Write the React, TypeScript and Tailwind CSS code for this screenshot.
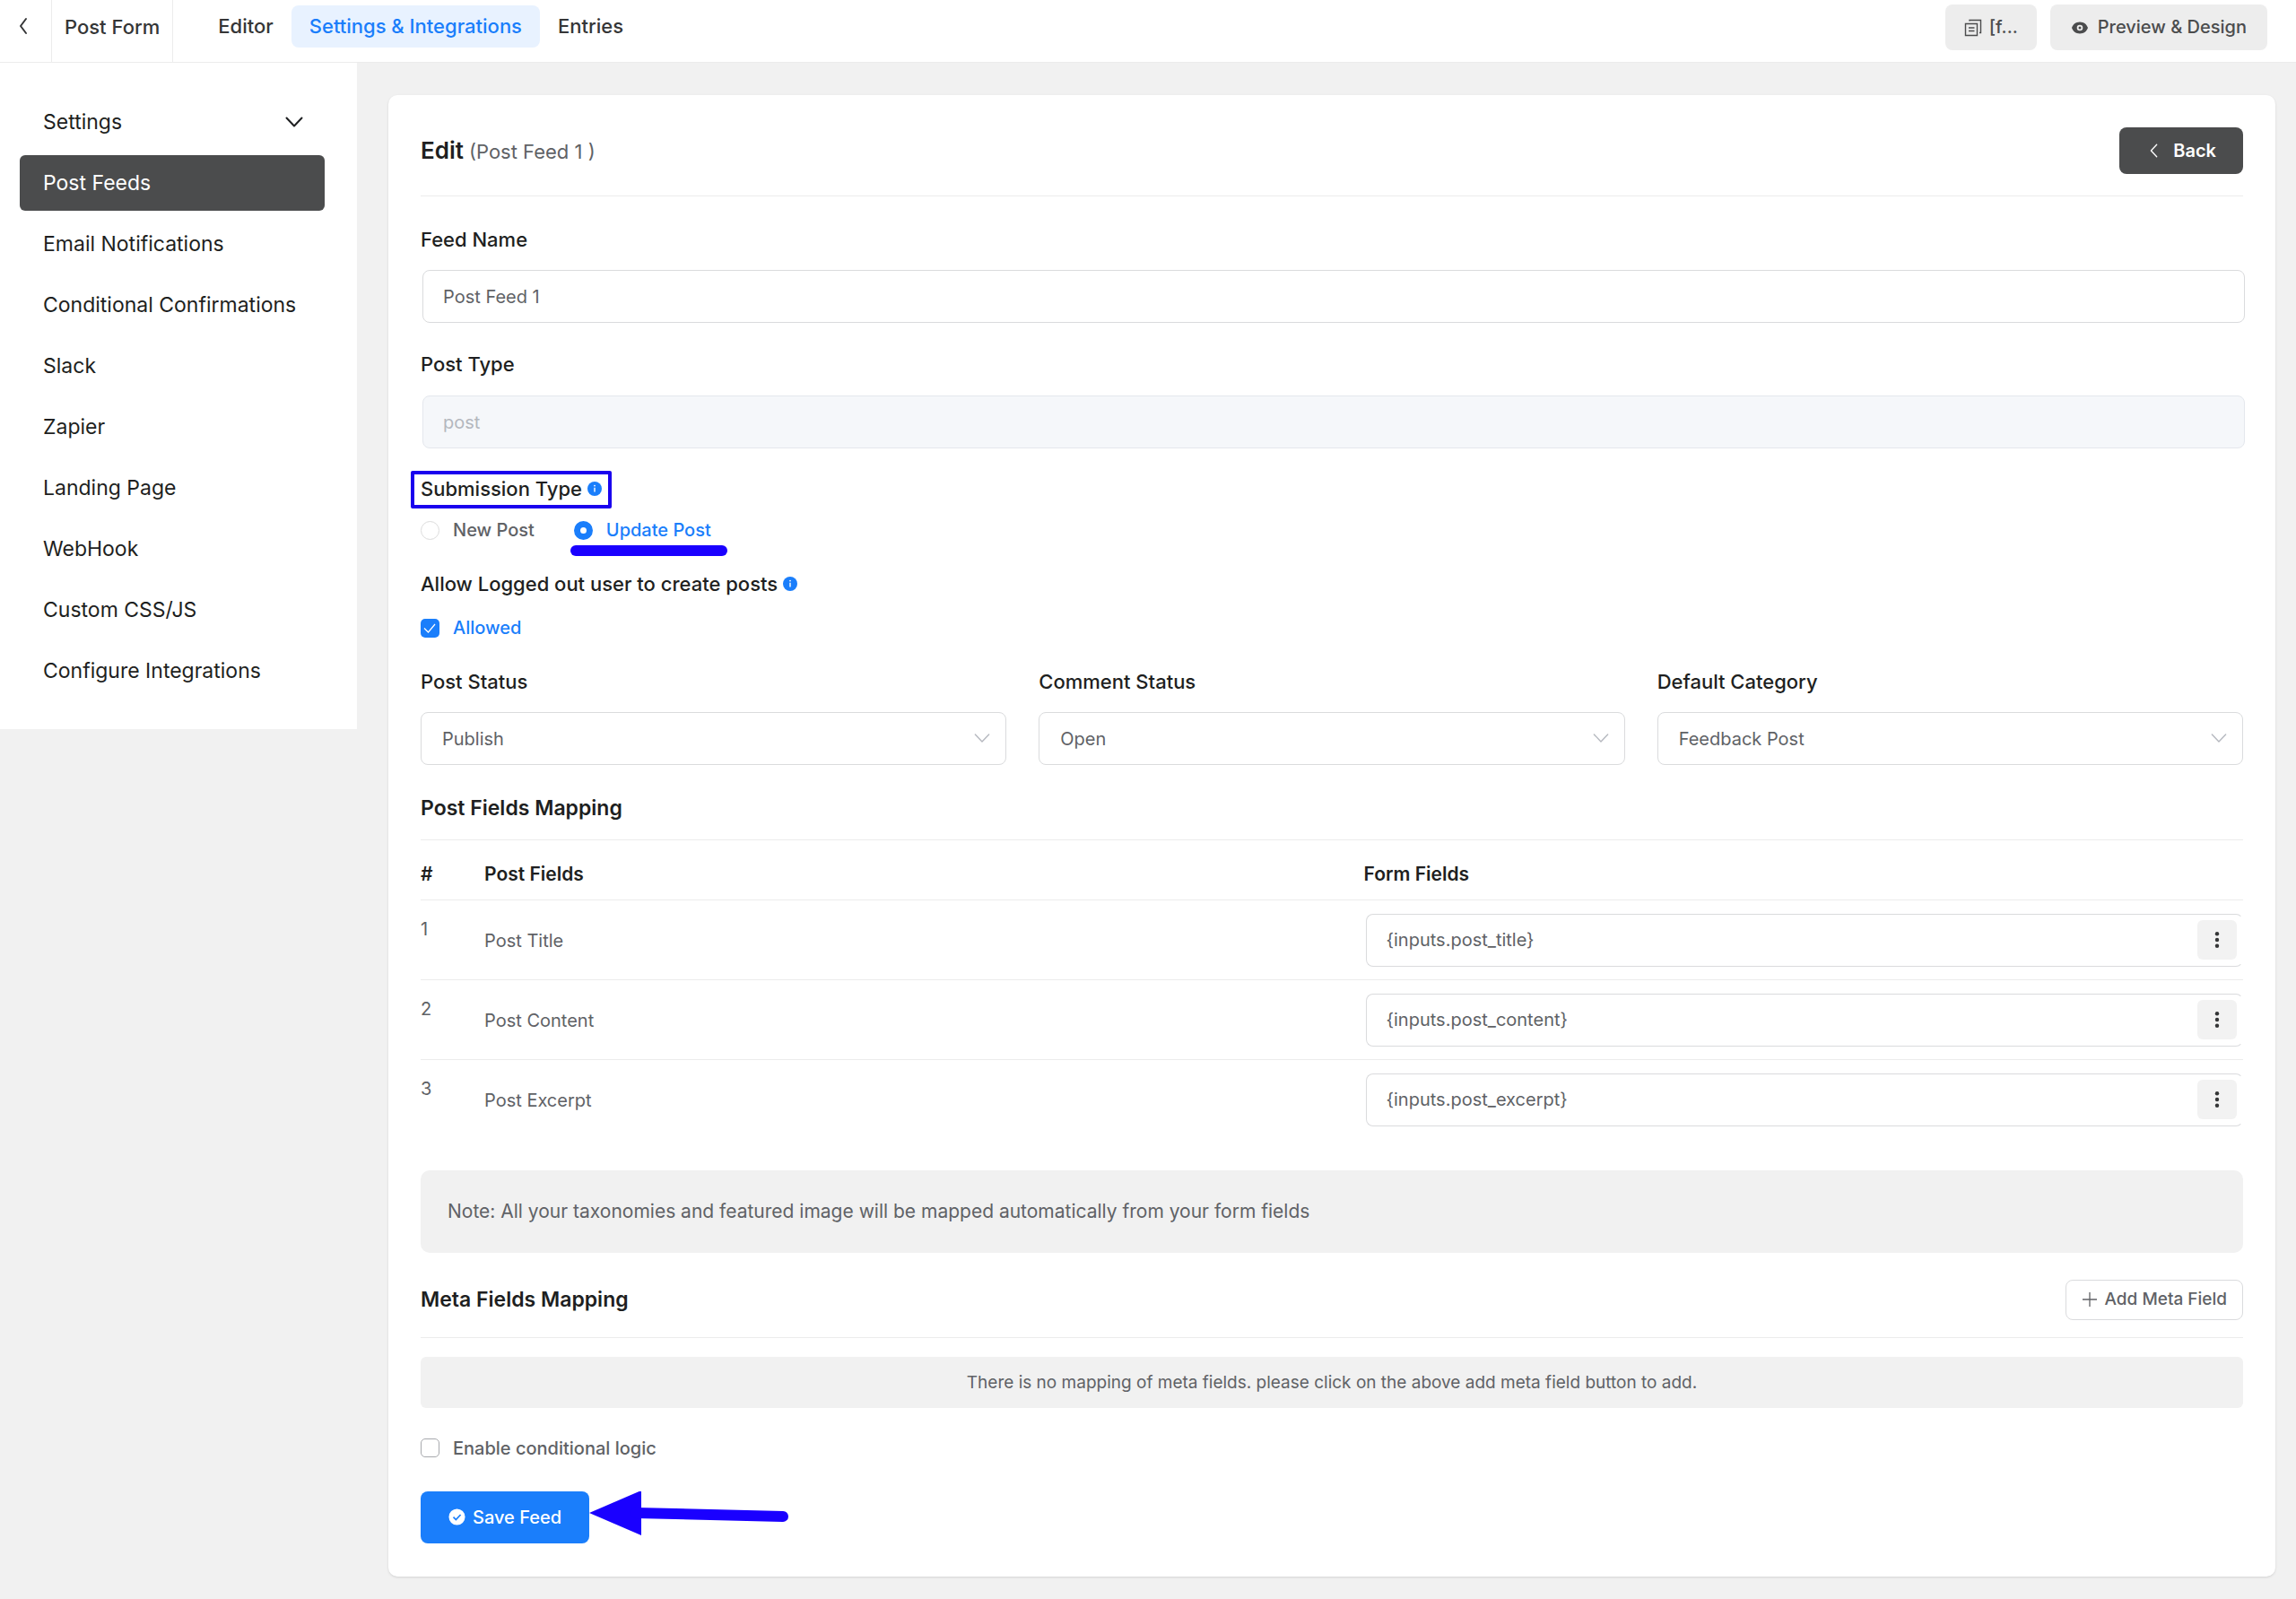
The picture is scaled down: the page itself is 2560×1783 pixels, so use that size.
import type { ReactNode } from "react";

const sidebarItems = [
  "Post Feeds",
  "Email Notifications",
  "Conditional Confirmations",
  "Slack",
  "Zapier",
  "Landing Page",
  "WebHook",
  "Custom CSS/JS",
  "Configure Integrations",
];

const statusSelects = [
  { id: "post-status", label: "Post Status", value: "Publish" },
  { id: "comment-status", label: "Comment Status", value: "Open" },
  { id: "default-category", label: "Default Category", value: "Feedback Post" },
];

const mappings = [
  { field: "Post Title", value: "{inputs.post_title}" },
  { field: "Post Content", value: "{inputs.post_content}" },
  { field: "Post Excerpt", value: "{inputs.post_excerpt}" },
];

function Chevron({ className, d }: { className: string; d: string }) {
  return (
    <svg
      className={className}
      viewBox="0 0 20 20"
      fill="none"
      stroke="currentColor"
      strokeLinecap="round"
      strokeLinejoin="round"
      aria-hidden="true"
    >
      <path d={d} />
    </svg>
  );
}

function InfoIcon() {
  return (
    <svg className="size-4" viewBox="0 0 16 16" aria-hidden="true">
      <circle cx="8" cy="8" r="8" fill="#1a7efb" />
      <circle cx="8" cy="4.6" r="0.9" fill="#fff" />
      <path d="M8 6.8v4.8" stroke="#fff" strokeWidth="1.4" />
    </svg>
  );
}

function CopyIcon() {
  return (
    <svg
      className="size-5"
      viewBox="0 0 20 20"
      fill="none"
      stroke="currentColor"
      strokeWidth="1.4"
      aria-hidden="true"
    >
      <path d="M1.5 5.5h13v13h-13z" />
      <path d="M6 2.5V1.5h12.5V15.5H17M5 10h6.5M5 13.5h6.5" />
    </svg>
  );
}

function EyeIcon() {
  return (
    <svg className="size-5" viewBox="0 0 20 20" aria-hidden="true">
      <path
        fill="currentColor"
        fillRule="evenodd"
        d="M10 3.5C5.5 3.5 2.2 6.3 1 10c1.2 3.7 4.5 6.5 9 6.5s7.8-2.8 9-6.5c-1.2-3.7-4.5-6.5-9-6.5ZM10 6.7a3.3 3.3 0 1 1 0 6.6 3.3 3.3 0 0 1 0-6.6Z"
      />
      <circle cx="10" cy="10" r="1.5" fill="currentColor" />
    </svg>
  );
}

function Label({ htmlFor, children }: { htmlFor: string; children: ReactNode }) {
  return (
    <label
      htmlFor={htmlFor}
      className="block text-[22px] leading-8 font-medium text-[#1e1f21]"
    >
      {children}
    </label>
  );
}

function TopBar() {
  return (
    <header className="flex h-[70px] border-b border-[#ececec] bg-white pr-8">
      <button
        type="button"
        aria-label="Go back"
        className="flex w-[58px] justify-center border-r border-[#ececec] pt-[19px] pr-1.5 text-[#353637]"
      >
        <Chevron className="size-5 stroke-2" d="M13 2 7 10l6 8" />
      </button>
      <div className="border-r border-[#ececec] px-3.5 pt-3.5 text-[22px] leading-8 font-medium text-[#353637]">
        Post Form
      </div>
      <nav className="ml-[30px] flex items-start pt-1.5 text-[22px] leading-[47px] font-medium text-[#353637]">
        <a href="#editor" className="px-5">
          Editor
        </a>
        <a
          href="#settings"
          className="rounded-lg bg-[#e8f2ff] px-5 text-[#1a7efb]"
        >
          Settings & Integrations
        </a>
        <a href="#entries" className="px-5">
          Entries
        </a>
      </nav>
      <div className="ml-auto flex gap-[15px] pt-[5px] text-xl leading-[51px] font-medium text-[#4b4c4d]">
        <button
          type="button"
          className="flex h-[51px] items-center gap-2 rounded-lg bg-[#ededed] px-[21px]"
        >
          <CopyIcon />
          [f...
        </button>
        <button
          type="button"
          className="flex h-[51px] items-center gap-2.5 rounded-lg bg-[#ededed] px-[23px]"
        >
          <EyeIcon />
          Preview & Design
        </button>
      </div>
    </header>
  );
}

function Sidebar() {
  return (
    <aside className="w-[398px] shrink-0 bg-white px-[22px] pt-[35px] pb-[34px] text-[23px] text-[#1e1f21]">
      <button
        type="button"
        className="flex h-[62px] w-[340px] items-center justify-between pr-6 pl-[26px]"
      >
        Settings
        <Chevron className="size-5 stroke-2" d="m1.5 5.5 8.5 9 8.5-9" />
      </button>
      <ul>
        {sidebarItems.map((item) => (
          <li key={item} className="mt-1.5">
            <a
              href="#feeds"
              className={
                item === "Post Feeds"
                  ? "block w-[340px] rounded-md bg-[#4b4c4d] pl-[26px] leading-[62px] text-white"
                  : "block w-[340px] pl-[26px] leading-[62px]"
              }
            >
              {item}
            </a>
          </li>
        ))}
      </ul>
    </aside>
  );
}

function SubmissionType() {
  return (
    <fieldset className="mt-[29px]">
      <legend className="relative flex items-center gap-1.5 text-[22px] leading-8 font-medium text-[#1e1f21]">
        Submission Type
        <InfoIcon />
        <span className="absolute -inset-x-[11px] -top-1 -bottom-1.5 rounded-xs border-4 border-[#1a00ee]" />
      </legend>
      <div className="mt-[18px] flex h-6 items-center gap-11 text-xl font-medium">
        <label className="flex items-center gap-[15px] text-[#606266]">
          <input
            type="radio"
            name="submission"
            className="size-[21px] appearance-none rounded-full border border-[#dcdcdc] bg-white"
          />
          New Post
        </label>
        <label className="relative flex items-center gap-[15px] text-[#1a7efb]">
          <input
            type="radio"
            name="submission"
            defaultChecked
            className="size-[21px] appearance-none rounded-full border-[7px] border-[#1a7efb] bg-white"
          />
          Update Post
          <span className="absolute top-[31px] -right-[18px] -left-1 h-3 rounded-full bg-[#1a00ff]" />
        </label>
      </div>
    </fieldset>
  );
}

function MappingTable() {
  return (
    <table className="w-full table-fixed border-t border-[#ececec] text-left text-xl text-[#606266]">
      <thead>
        <tr className="h-[67px] border-b border-[#ececec] text-[21px] text-[#1e1f21]">
          <th className="w-[71px] pt-2.5 font-semibold">#</th>
          <th className="pt-2.5 font-semibold">Post Fields</th>
          <th className="pt-2.5 font-semibold">Form Fields</th>
        </tr>
      </thead>
      <tbody>
        {mappings.map((row, index) => (
          <tr
            key={row.field}
            className="h-[89px] border-b border-[#ececec] last:border-b-0"
          >
            <td className="pt-[18px] align-top">{index + 1}</td>
            <td className="pt-0.5">{row.field}</td>
            <td className="pl-0.5">
              <div className="flex h-[59px] items-center rounded-lg border border-[#dadbdd] border-r-transparent pr-1.5">
                <input
                  type="text"
                  aria-label={row.field}
                  defaultValue={row.value}
                  className="h-full min-w-0 flex-1 rounded-lg pl-[22px] outline-none"
                />
                <button
                  type="button"
                  aria-label={`Insert shortcode for ${row.field}`}
                  className="flex size-11 items-center justify-center rounded-md bg-[#f2f2f2] text-[#353637]"
                >
                  <svg className="size-5" viewBox="0 0 20 20" fill="currentColor">
                    <circle cx="10" cy="3.2" r="2.2" />
                    <circle cx="10" cy="10" r="2.2" />
                    <circle cx="10" cy="16.8" r="2.2" />
                  </svg>
                </button>
              </div>
            </td>
          </tr>
        ))}
      </tbody>
    </table>
  );
}

function SaveRow() {
  return (
    <div className="mt-9 flex items-center">
      <button
        type="submit"
        className="flex h-[58px] items-center gap-2 rounded-lg bg-[#1a7efb] px-[31px] text-xl font-medium text-white"
      >
        <svg className="size-[19px]" viewBox="0 0 20 20" aria-hidden="true">
          <circle cx="10" cy="10" r="9.5" fill="#fff" />
          <path
            d="m5.8 10.2 3 3 5.5-5.8"
            fill="none"
            stroke="#1a7efb"
            strokeWidth="1.8"
          />
        </svg>
        Save Feed
      </button>
      <svg className="h-[58px] w-[224px]" viewBox="0 0 224 58" aria-hidden="true">
        <path d="M0 24 58-1v50Z" fill="#1a00ff" />
        <path
          d="M52 24 216 28"
          stroke="#1a00ff"
          strokeWidth="12"
          strokeLinecap="round"
        />
      </svg>
    </div>
  );
}

export default function App() {
  return (
    <div className="min-h-screen bg-[#f1f1f1] font-['Inter','Liberation_Sans',sans-serif]">
      <TopBar />
      <div className="flex items-start">
        <Sidebar />
        <main className="mt-9 mr-[23px] mb-[25px] ml-[35px] min-w-0 flex-1 rounded-[10px] bg-white px-9 pt-9 pb-[37px] shadow-sm">
          <div className="flex items-center justify-between border-b border-[#ececec] pb-6">
            <h1 className="flex items-baseline gap-1.5 text-[26px] leading-8 font-semibold text-[#1e1f21]">
              Edit
              <small className="text-[22px] font-normal text-[#606266]">
                (Post Feed 1 )
              </small>
            </h1>
            <button
              type="button"
              className="flex h-[52px] items-center gap-3 rounded-lg bg-[#4b4c4d] px-[30px] text-xl font-semibold text-white"
            >
              <Chevron className="size-[18px] stroke-[1.5]" d="M13 2.5 6 10l7 7.5" />
              Back
            </button>
          </div>

          <form onSubmit={(e) => e.preventDefault()}>
            <div className="mt-8">
              <Label htmlFor="feed-name">Feed Name</Label>
              <input
                id="feed-name"
                type="text"
                defaultValue="Post Feed 1"
                className="mt-[18px] ml-0.5 block h-[59px] w-full rounded-lg border border-[#dadbdd] px-[22px] text-xl text-[#606266]"
              />
            </div>
            <div className="mt-[30px]">
              <Label htmlFor="post-type">Post Type</Label>
              <input
                id="post-type"
                type="text"
                defaultValue="post"
                disabled
                className="mt-[19px] ml-0.5 block h-[59px] w-full rounded-lg border border-[#e4e7ed] bg-[#f5f7fa] px-[22px] text-xl text-[#b4b7be]"
              />
            </div>

            <SubmissionType />

            <fieldset className="mt-8">
              <legend className="flex items-center gap-1.5 text-[22px] leading-8 font-medium text-[#1e1f21]">
                Allow Logged out user to create posts
                <InfoIcon />
              </legend>
              <label className="mt-[21px] flex h-6 items-center gap-[15px] text-xl font-medium text-[#1a7efb]">
                <span className="relative flex">
                  <input
                    type="checkbox"
                    defaultChecked
                    className="size-[21px] appearance-none rounded-[5px] bg-[#1a7efb]"
                  />
                  <svg
                    className="pointer-events-none absolute inset-0 size-[21px]"
                    viewBox="0 0 21 21"
                    fill="none"
                    stroke="#fff"
                    strokeWidth="1.2"
                  >
                    <path d="m4 10.5 4.5 4.5 7.5-9" />
                  </svg>
                </span>
                Allowed
              </label>
            </fieldset>

            <div className="mt-8 grid grid-cols-3 gap-9">
              {statusSelects.map((item) => (
                <div key={item.id}>
                  <Label htmlFor={item.id}>{item.label}</Label>
                  <div className="relative mt-[18px]">
                    <select
                      id={item.id}
                      className="h-[59px] w-full appearance-none rounded-lg border border-[#dadbdd] bg-white px-[23px] text-xl text-[#606266]"
                    >
                      <option>{item.value}</option>
                    </select>
                    <Chevron
                      className="pointer-events-none absolute top-5 right-[18px] size-[18px] stroke-[1.5] text-[#b4b7be]"
                      d="m1.5 5.5 8.5 9 8.5-9"
                    />
                  </div>
                </div>
              ))}
            </div>

            <h2 className="mt-8 mb-[19px] text-[23px] leading-8 font-semibold text-[#1e1f21]">
              Post Fields Mapping
            </h2>
            <MappingTable />

            <p className="mt-[34px] rounded-[10px] bg-[#f1f1f1] px-[30px] text-[21px] leading-[92px] text-[#606266]">
              Note: All your taxonomies and featured image will be mapped
              automatically from your form fields
            </p>

            <div className="mt-[30px] flex items-center justify-between border-b border-[#ececec] pb-[19px]">
              <h2 className="text-[23px] leading-8 font-semibold text-[#1e1f21]">
                Meta Fields Mapping
              </h2>
              <button
                type="button"
                className="flex h-[45px] items-center gap-2 rounded-lg border border-[#dadbdd] px-[17px] text-[19px] font-medium text-[#606266]"
              >
                <svg
                  className="size-[18px]"
                  viewBox="0 0 18 18"
                  stroke="currentColor"
                  strokeWidth="1.3"
                >
                  <path d="M9 1v16M1 9h16" />
                </svg>
                Add Meta Field
              </button>
            </div>
            <p className="mt-[21px] rounded-md bg-[#f1f1f1] text-center text-[19px] leading-[57px] text-[#606266]">
              There is no mapping of meta fields. please click on the above add
              meta field button to add.
            </p>

            <label className="mt-[33px] flex h-6 w-fit items-center gap-[15px] text-xl font-medium text-[#606266]">
              <input
                type="checkbox"
                className="size-[21px] appearance-none rounded-[5px] border border-[#a7a9ad] bg-white"
              />
              Enable conditional logic
            </label>

            <SaveRow />
          </form>
        </main>
      </div>
    </div>
  );
}
